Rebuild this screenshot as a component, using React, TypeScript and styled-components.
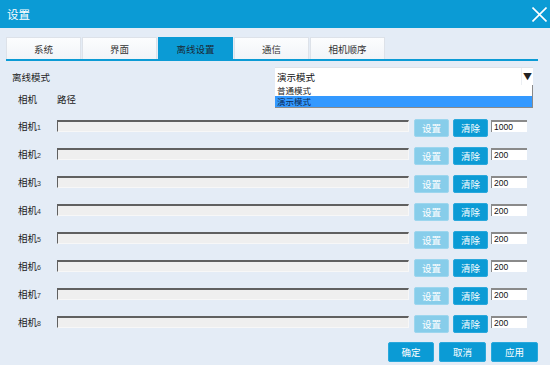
import React from "react";
import styled, { createGlobalStyle } from "styled-components";

const Global = createGlobalStyle`
  html, body { margin: 0; padding: 0; background: #e4ecf6; }
  body { font-family: "Noto Sans CJK SC", "Noto Sans", sans-serif; }
  * { box-sizing: border-box; }
`;

const Window = styled.div`
  width: 550px;
  height: 365px;
  background: #e4ecf6;
  display: flex;
  flex-direction: column;
  overflow: hidden;
`;

const TitleBar = styled.div`
  height: 28px;
  flex: 0 0 28px;
  background: #0b9bd5;
  display: flex;
  align-items: center;
  justify-content: space-between;
  padding: 0 3px 0 7px;
`;

const Title = styled.span`
  color: #fff;
  font-size: 11.5px;
  line-height: 14px;
`;

const CloseButton = styled.button`
  width: 15px;
  height: 15px;
  padding: 0;
  border: 0;
  background: transparent;
  display: flex;
  margin-top: 1px;
`;

const Body = styled.div`
  padding: 9px 12px 0 6px;
  display: flex;
  flex-direction: column;
`;

const TabBar = styled.div`
  display: flex;
  gap: 1px;
  border-bottom: 2px solid #0b9bd5;
  height: 24px;
`;

const Tab = styled.div<{ $active?: boolean }>`
  width: 75px;
  height: 22px;
  display: flex;
  align-items: center;
  justify-content: center;
  font-size: 9.5px;
  color: ${(p) => (p.$active ? "#1a2a36" : "#333")};
  background: ${(p) =>
    p.$active ? "#0b9bd5" : "linear-gradient(#fcfdfe, #f1f4f8)"};
  border: 1px solid ${(p) => (p.$active ? "#0b9bd5" : "#dde2e9")};
  border-bottom: 0;
`;

const ModeRow = styled.div`
  margin-top: 6px;
  height: 18px;
  display: flex;
  align-items: center;
`;

const ModeLabel = styled.span`
  flex: 0 0 269px;
  padding-left: 6px;
  font-size: 9.5px;
  color: #222;
  margin-top: 2px;
`;

const Select = styled.div`
  position: relative;
  width: 258px;
  height: 18px;
  background: #fff;
  border-top: 1px solid #dfe3e8;
  display: flex;
  align-items: center;
`;

const SelectValue = styled.span`
  flex: 1;
  padding-left: 2px;
  font-size: 9.5px;
  color: #111;
`;

const Arrow = styled.span`
  width: 12px;
  height: 17px;
  border-left: 1px solid #eceff3;
  display: flex;
  align-items: center;
  justify-content: center;
  font-size: 9px;
  color: #222;
`;

const DropList = styled.div`
  position: absolute;
  top: 17px;
  left: 0;
  width: 258px;
  background: #fff;
  border-right: 1px solid #8a8a8a;
  border-bottom: 1px solid #8a8a8a;
  display: flex;
  flex-direction: column;
  z-index: 2;
`;

const DropItem = styled.div<{ $selected?: boolean }>`
  height: 11px;
  line-height: 11px;
  font-size: 8.5px;
  padding-left: 2px;
  color: ${(p) => (p.$selected ? "#0d2a55" : "#222")};
  background: ${(p) => (p.$selected ? "#3399ff" : "transparent")};
  white-space: nowrap;
`;

const HeaderRow = styled.div`
  margin-top: 8px;
  height: 12px;
  display: flex;
  align-items: center;
  padding-left: 12px;
  font-size: 9.5px;
  color: #222;
`;

const HeaderCell = styled.span<{ $w?: number }>`
  width: ${(p) => (p.$w ? `${p.$w}px` : "auto")};
`;

const Rows = styled.div`
  margin-top: 13px;
  display: flex;
  flex-direction: column;
`;

const Row = styled.div`
  height: 28px;
  display: flex;
  align-items: flex-start;
  padding-left: 12px;
`;

const CamLabel = styled.span`
  width: 39px;
  font-size: 9.5px;
  line-height: 14px;
  color: #222;
  margin-top: 1px;
`;

const Digit = styled.span`
  font-size: 7px;
  font-family: "Liberation Sans", sans-serif;
  color: #333;
`;

const PathInput = styled.div`
  width: 352px;
  height: 12px;
  margin-top: 2px;
  background: #efefef;
  border-top: 2px solid #606060;
  border-left: 1px solid #606060;
  border-right: 1px solid #f7f7f7;
  border-bottom: 1px solid #f7f7f7;
`;

const SmallButton = styled.button<{ $light?: boolean; $ml: number }>`
  width: 35px;
  height: 18px;
  margin-top: 1px;
  margin-left: ${(p) => p.$ml}px;
  padding: 0;
  border: 1px solid ${(p) => (p.$light ? "#9dd6ee" : "#2aa8dc")};
  border-radius: 2px;
  background: ${(p) => (p.$light ? "#87cdea" : "#0b9bd5")};
  color: #fff;
  font-family: "Noto Sans CJK SC", sans-serif;
  font-size: 9.5px;
  line-height: 16px;
`;

const NumInput = styled.input`
  width: 36px;
  height: 12px;
  margin-top: 2px;
  margin-left: 3px;
  padding: 0 2px;
  background: #fff;
  border: 0;
  border-top: 2px solid #8a8a8a;
  border-left: 1px solid #8a8a8a;
  font-family: "Liberation Sans", sans-serif;
  font-size: 8.5px;
  color: #111;
  outline: none;
`;

const Footer = styled.div`
  display: flex;
  justify-content: flex-end;
  gap: 5px;
`;

const FooterButton = styled.button<{ $w: number }>`
  width: ${(p) => p.$w}px;
  height: 20px;
  padding: 0;
  border: 1px solid #2aa8dc;
  border-radius: 2px;
  background: #0b9bd5;
  color: #fff;
  font-family: "Noto Sans CJK SC", sans-serif;
  font-size: 9.5px;
`;

const tabs = ["系统", "界面", "离线设置", "通信", "相机顺序"];
const cams = [
  { n: 1, v: "1000" },
  { n: 2, v: "200" },
  { n: 3, v: "200" },
  { n: 4, v: "200" },
  { n: 5, v: "200" },
  { n: 6, v: "200" },
  { n: 7, v: "200" },
  { n: 8, v: "200" },
];

export default function App() {
  return (
    <>
      <Global />
      <Window>
        <TitleBar>
          <Title>设置</Title>
          <CloseButton aria-label="close">
            <svg width="15" height="15" viewBox="0 0 15 15">
              <path d="M0.5 0.5 L14.5 14.5 M14.5 0.5 L0.5 14.5" stroke="#fff" strokeWidth="1.6" fill="none" />
            </svg>
          </CloseButton>
        </TitleBar>
        <Body>
          <TabBar>
            {tabs.map((t, i) => (
              <Tab key={t} $active={i === 2}>
                {t}
              </Tab>
            ))}
          </TabBar>
          <ModeRow>
            <ModeLabel>离线模式</ModeLabel>
            <Select>
              <SelectValue>演示模式</SelectValue>
              <Arrow>▼</Arrow>
              <DropList>
                <DropItem>普通模式</DropItem>
                <DropItem $selected>演示模式</DropItem>
              </DropList>
            </Select>
          </ModeRow>
          <HeaderRow>
            <HeaderCell $w={39}>相机</HeaderCell>
            <HeaderCell>路径</HeaderCell>
          </HeaderRow>
          <Rows>
            {cams.map((c) => (
              <Row key={c.n}>
                <CamLabel>
                  相机<Digit>{c.n}</Digit>
                </CamLabel>
                <PathInput />
                <SmallButton $light $ml={5}>设置</SmallButton>
                <SmallButton $ml={4}>清除</SmallButton>
                <NumInput readOnly value={c.v} />
              </Row>
            ))}
          </Rows>
          <Footer>
            <FooterButton $w={46}>确定</FooterButton>
            <FooterButton $w={47}>取消</FooterButton>
            <FooterButton $w={47}>应用</FooterButton>
          </Footer>
        </Body>
      </Window>
    </>
  );
}
